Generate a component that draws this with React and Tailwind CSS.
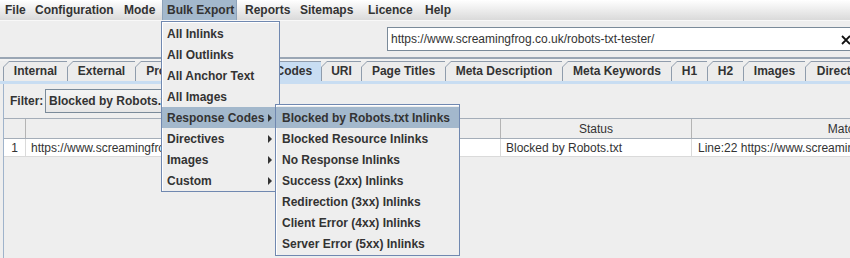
import React from "react";

const MENUS = [
  { label: "File", cls: "w-[30px]" },
  { label: "Configuration", cls: "w-[89px]" },
  { label: "Mode", cls: "w-[43px]" },
  { label: "Bulk Export", cls: "w-[75px] bg-[#a3b8cc] shadow-[inset_1px_0_0_#8ea3ba,inset_-1px_0_0_#8ea3ba]" },
  { label: "Reports", cls: "w-[58px] pl-[8px]" },
  { label: "Sitemaps", cls: "w-[68px]" },
  { label: "Licence", cls: "w-[57px]" },
  { label: "Help", cls: "w-[40px]" },
];

const TABS = [
  { label: "Internal", cls: "w-[64px]" },
  { label: "External", cls: "w-[68px]" },
  { label: "Protocol", cls: "w-[70px]" },
  { label: "Response Codes", cls: "w-[116px]", sel: true },
  { label: "URI", cls: "w-[40px]" },
  { label: "Page Titles", cls: "w-[84px]" },
  { label: "Meta Description", cls: "w-[117px]" },
  { label: "Meta Keywords", cls: "w-[109px]" },
  { label: "H1", cls: "w-[36px]" },
  { label: "H2", cls: "w-[36px]" },
  { label: "Images", cls: "w-[62px]" },
  { label: "Directives", cls: "w-[80px]" },
];

const MAIN_ITEMS = [
  { label: "All Inlinks" },
  { label: "All Outlinks" },
  { label: "All Anchor Text" },
  { label: "All Images" },
  { label: "Response Codes", sub: true, active: true },
  { label: "Directives", sub: true },
  { label: "Images", sub: true },
  { label: "Custom", sub: true },
];

const SUB_ITEMS = [
  "Blocked by Robots.txt Inlinks",
  "Blocked Resource Inlinks",
  "No Response Inlinks",
  "Success (2xx) Inlinks",
  "Redirection (3xx) Inlinks",
  "Client Error (4xx) Inlinks",
  "Server Error (5xx) Inlinks",
];

function Arrow() {
  return (
    <svg width="4" height="8" viewBox="0 0 4 8" className="absolute right-[7px] top-[7px]">
      <path d="M0 0 L4 4 L0 8 Z" fill="#333333" />
    </svg>
  );
}

function Tab({ label, cls, sel }) {
  return (
    <div className={`relative h-[20px] shrink-0 ${cls}`}>
      <div className="absolute inset-0 bg-[#8f9cac] [clip-path:polygon(0_6px,6px_0,100%_0,100%_100%,0_100%)]" />
      <div
        className={`absolute left-[1px] top-[1px] right-0 bottom-0 [clip-path:polygon(0_5px,5px_0,100%_0,100%_100%,0_100%)] ${
          sel ? "bg-[#c8ddf2]" : "bg-[#ececec]"
        }`}
      />
      <span className="relative flex h-full items-center justify-center pl-[1px] font-bold whitespace-nowrap">
        {label}
      </span>
    </div>
  );
}

export default function App() {
  return (
    <div className="relative h-[258px] w-[850px] overflow-hidden bg-[#eeeeee] font-['Liberation_Sans',Arial,sans-serif] text-[12px] leading-none text-[#333333]">
      {/* Menu bar */}
      <div className="flex h-[21px] border-b border-[#f8f8f8] bg-[linear-gradient(#ffffff,#dadada)]">
        {MENUS.map((m) => (
          <div
            key={m.label}
            className={`flex h-full shrink-0 items-center pl-[5px] font-bold whitespace-nowrap ${m.cls}`}
          >
            {m.label}
          </div>
        ))}
      </div>

      {/* Toolbar */}
      <div className="flex h-[36px] pt-[6px]">
        <div className="w-[387px] shrink-0" />
        <div className="relative flex h-[24px] w-[470px] shrink-0 items-center border border-[#7a8a99] bg-white pl-[3px] pb-[1px]">
          <span className="whitespace-nowrap">https://www.screamingfrog.co.uk/robots-txt-tester/</span>
          <svg
            width="10"
            height="10"
            viewBox="0 0 10 10"
            className="absolute left-[453px] top-[7px]"
          >
            <path d="M1 1 L9 9 M9 1 L1 9" stroke="#111111" strokeWidth="1.8" />
          </svg>
        </div>
      </div>

      {/* separator */}
      <div className="h-[2px] bg-[#9aa6b4]" />
      <div className="h-[2px] bg-[#f2f2f2]" />

      {/* Tabs */}
      <div className="flex h-[20px] pl-[3px]">
        {TABS.map((t) => (
          <Tab key={t.label} {...t} />
        ))}
      </div>
      <div className="h-[3px] bg-[#c8ddf2]" />

      {/* Content */}
      <div className="ml-[3px] h-[200px] border-l border-[#9fb3cb]">
        <div className="flex h-[34px] items-start pt-[5px]">
          <div className="flex h-[24px] w-[41px] shrink-0 items-center pl-[6px] font-bold">Filter:</div>
          <div className="flex h-[24px] w-[200px] shrink-0 items-center border border-[#7a8a99] bg-[linear-gradient(#f4f4f4,#e6e6e6)] pl-[3px] font-bold whitespace-nowrap">
            Blocked by Robots.txt Inlinks
          </div>
        </div>

        {/* Table header */}
        <div className="flex h-[21px] border-t border-b border-[#a4adb8] bg-[#eeeeee]">
          <div className="w-[22px] shrink-0 border-r border-[#b4b4b4]" />
          <div className="w-[475px] shrink-0 border-r border-[#b4b4b4]" />
          <div className="flex w-[191px] shrink-0 items-center justify-center border-r border-[#b4b4b4]">
            Status
          </div>
          <div className="flex w-[402px] shrink-0 items-center justify-center border-r border-[#b4b4b4]">
            Matched Robots.txt Line
          </div>
        </div>
        {/* Row */}
        <div className="flex h-[18px] border-b border-[#dadada] bg-white">
          <div className="flex w-[22px] shrink-0 items-center justify-center border-r border-[#dadada]">1</div>
          <div className="flex w-[475px] shrink-0 items-center border-r border-[#dadada] pl-[5px] whitespace-nowrap">
            https://www.screamingfrog.co.uk/
          </div>
          <div className="flex w-[191px] shrink-0 items-center border-r border-[#dadada] pl-[5px] whitespace-nowrap">
            Blocked by Robots.txt
          </div>
          <div className="flex w-[402px] shrink-0 items-center border-r border-[#dadada] pl-[6px] whitespace-nowrap">
            Line:22 https://www.screamingfrog.co.uk/robots.txt Disallow: /robots-txt-tester/
          </div>
        </div>
      </div>

      {/* Bulk Export menu */}
      <div className="absolute left-[161px] top-[21px] w-[119px] border border-[#7088b0] bg-[#eeeeee] pt-[1px] shadow-[inset_1px_1px_0_#ffffff]">
        {MAIN_ITEMS.map((it) => (
          <div
            key={it.label}
            className={`relative flex h-[21px] items-center pl-[5px] font-bold whitespace-nowrap ${
              it.active ? "bg-[#a3b8cc]" : ""
            }`}
          >
            {it.label}
            {it.sub && <Arrow />}
          </div>
        ))}
      </div>

      {/* Response Codes submenu */}
      <div className="absolute left-[275px] top-[104px] w-[185px] border border-[#7088b0] bg-[#eeeeee] pt-[2px] pb-[1px] shadow-[inset_1px_1px_0_#ffffff]">
        {SUB_ITEMS.map((s, i) => (
          <div
            key={s}
            className={`flex h-[21px] items-center pl-[6px] font-bold whitespace-nowrap ${
              i === 0 ? "bg-[#a3b8cc]" : ""
            }`}
          >
            {s}
          </div>
        ))}
      </div>
    </div>
  );
}
